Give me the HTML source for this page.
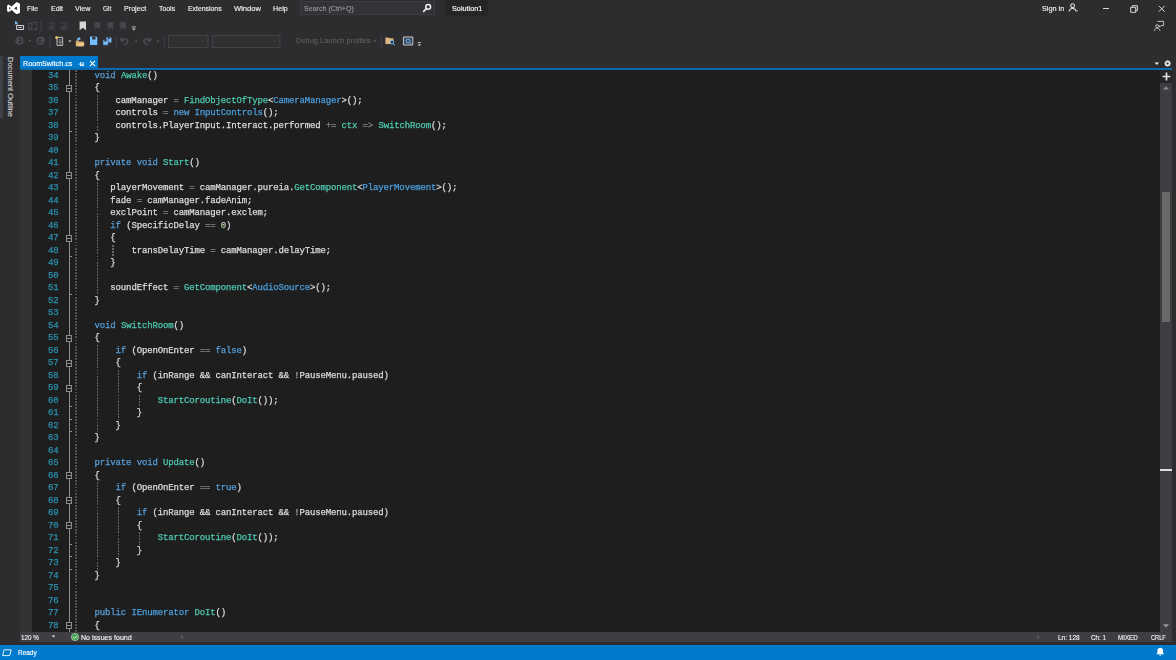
<!DOCTYPE html>
<html lang="en"><head><meta charset="utf-8"><title>RoomSwitch.cs - Solution1</title>
<style>
*{margin:0;padding:0;box-sizing:border-box}
html,body{width:1176px;height:660px;overflow:hidden;background:#2d2d30}
body{position:relative;font-family:"Liberation Sans","DejaVu Sans",sans-serif;font-size:8.6px;color:#f1f1f1}
.abs,.ln,.cl,.fold,.guide,.tick,#page div,#page span.a,#page svg{position:absolute}
#page{position:absolute;left:0;top:0;width:1176px;height:660px;overflow:hidden;background:#2d2d30}
.t{height:10px;line-height:10px;white-space:nowrap;transform-origin:0 0;-webkit-text-stroke:0.15px}
#editor{left:19.6px;top:70px;width:1140.4px;height:561.6px;background:#1e1e1e}
#imargin{left:19.6px;top:70px;width:12.1px;height:561.6px;background:#333333}
.ln{left:30px;width:28.4px;text-align:right;font-family:"Liberation Mono","DejaVu Sans Mono",monospace;font-size:9.000px;line-height:12.5px;height:12.5px;color:#2b91af;white-space:pre;-webkit-text-stroke:0.25px;letter-spacing:-0.1469px}
.cl{font-family:"Liberation Mono","DejaVu Sans Mono",monospace;font-size:9.000px;line-height:12.5px;height:12.5px;color:#dcdcdc;white-space:pre;-webkit-text-stroke:0.25px;letter-spacing:-0.1469px}
.k{color:#569cd6}.m{color:#4ec9b0}.c{color:#4a9fdc}.o{color:#858585}.n{color:#b5cea8}.e{color:#ababab}
.fold{left:65.9px;width:6.5px;height:7.1px;border:1px solid #8c8c8c;background:#1e1e1e}
.fold:after{content:"";position:absolute;left:0.2px;right:0.2px;top:1.9px;height:1.3px;background:#8c8c8c}
#codewrap{left:0;top:0;width:1176px;height:660px;filter:blur(0.42px)}
#oline{left:68.85px;top:70px;width:1.2px;height:561.6px;background:#8c8c8c}
.guide{width:1.7px;background:repeating-linear-gradient(to bottom,#666666 0,#666666 1.9px,transparent 1.9px,transparent 3.0625px)}
.g0{opacity:0.72}
.tick{left:69px;width:3.2px;height:1.2px;background:#8c8c8c}
</style></head>
<body><div id="page">
<!-- ===== title / menu bar ===== -->
<svg id="vslogo" style="left:6.85px;top:1.8px" width="13.2" height="12.6" viewBox="0 0 13.2 12.6"><path fill="#ffffff" fill-rule="evenodd" d="M9.7 0.1L13 1.7V10.7L9.7 12.5L4.6 8.1L1.8 10.1L0.1 9.2V3.4L1.8 2.5L4.6 4.5Z M2.2 4.9V7.7L3.6 6.3Z M9.9 4.4V8.2L7.1 6.3Z"/></svg>
<div class="t" style="left:27.10px;top:3.50px;font-size:8.0px;transform:scaleX(0.8540);color:#f1f1f1;">File</div>
<div class="t" style="left:50.50px;top:3.50px;font-size:8.0px;transform:scaleX(0.8696);color:#f1f1f1;">Edit</div>
<div class="t" style="left:74.70px;top:3.50px;font-size:8.0px;transform:scaleX(0.8953);color:#f1f1f1;">View</div>
<div class="t" style="left:102.80px;top:3.50px;font-size:8.0px;transform:scaleX(0.8105);color:#f1f1f1;">Git</div>
<div class="t" style="left:123.80px;top:3.50px;font-size:8.0px;transform:scaleX(0.8923);color:#f1f1f1;">Project</div>
<div class="t" style="left:159.10px;top:3.50px;font-size:8.0px;transform:scaleX(0.8619);color:#f1f1f1;">Tools</div>
<div class="t" style="left:187.90px;top:3.50px;font-size:8.0px;transform:scaleX(0.8589);color:#f1f1f1;">Extensions</div>
<div class="t" style="left:234.00px;top:3.50px;font-size:8.0px;transform:scaleX(0.9480);color:#f1f1f1;">Window</div>
<div class="t" style="left:273.30px;top:3.50px;font-size:8.0px;transform:scaleX(0.8942);color:#f1f1f1;">Help</div>
<div id="search" style="left:300px;top:1px;width:135px;height:14px;background:#333337;border:1px solid #3b3b40"></div>
<div class="t" style="left:304.20px;top:3.50px;font-size:8.0px;transform:scaleX(0.8855);color:#999999;">Search (Ctrl+Q)</div>
<svg style="left:422px;top:3px" width="10" height="10" viewBox="0 0 10 10"><circle cx="6.2" cy="3.8" r="2.4" fill="none" stroke="#f1f1f1" stroke-width="1.5"/><path d="M4.4 5.6 L1.2 8.8" stroke="#f1f1f1" stroke-width="1.7"/></svg>
<div style="left:446px;top:0;width:42px;height:15.5px;background:#252526"></div>
<div class="t" style="left:451.50px;top:3.50px;font-size:8.0px;transform:scaleX(0.9083);color:#ffffff;">Solution1</div>
<div class="t" style="left:1041.50px;top:3.50px;font-size:8.0px;transform:scaleX(0.9109);color:#f1f1f1;">Sign in</div>
<svg style="left:1068.4px;top:3.2px" width="11" height="10" viewBox="0 0 11 10"><circle cx="4.600" cy="2.700" r="1.900" fill="none" stroke="#e4e4e4" stroke-width="1.050"/><path d="M1 8.600C1.400 6.200 2.900 5.400 4.600 5.400C6.300 5.400 7.700 6.200 8.200 8.300" fill="none" stroke="#e4e4e4" stroke-width="1.050"/><path d="M8.300 7.600h1.800l-0.900 1.200z" fill="#e4e4e4"/></svg>
<div style="left:1102.500px;top:7.900px;width:6.400px;height:1.100px;background:#d8d8d8"></div>
<svg style="left:1129.600px;top:4.600px" width="8" height="8" viewBox="0 0 8 8"><path d="M0.700 2.300h5v5h-5z M2.300 2.300v-1.600h5v5h-1.600" fill="none" stroke="#dcdcdc" stroke-width="1"/></svg>
<svg style="left:1158.400px;top:5px" width="8" height="8" viewBox="0 0 8 8"><path d="M0.900 0.900L6.700 6.700M6.700 0.900L0.900 6.700" stroke="#dcdcdc" stroke-width="0.950"/></svg>
<svg style="left:1153px;top:20px" width="12" height="12" viewBox="0 0 12 12"><path d="M4.4 1.4h6.2v4.2h-2.6l-1.4 1.4v-1.4" fill="none" stroke="#d0d0d0" stroke-width="0.9"/><circle cx="4.2" cy="6.2" r="1.5" fill="none" stroke="#d0d0d0" stroke-width="0.9"/><path d="M1.4 10.8C1.8 8.8 3 8.2 4.2 8.2C5.4 8.2 6.6 8.8 7 10.8" fill="none" stroke="#d0d0d0" stroke-width="0.9"/></svg>

<!-- ===== toolbar row 1 ===== -->
<svg style="left:13px;top:20px;filter:blur(0.35px)" width="125" height="12" viewBox="0 0 125 12">
 <path d="M2 0.800L2 4.800L3.200 3.800L4.300 5.300L5 4.800L4 3.400L5.400 3.200Z" fill="#75beff"/>
 <path d="M3.600 5.500h7v4h-7z" fill="none" stroke="#d6d6d6" stroke-width="1"/><path d="M5.400 7.500h3.600" stroke="#d6d6d6" stroke-width="0.900"/>
 <path d="M15.6 3.4h3.2v6h-3.2zM20.2 2.4h3.6v7h-3.6" fill="none" stroke="#4a4a4e" stroke-width="1.1"/>
 <path d="M28 0.5v11" stroke="#3f3f46" stroke-width="1"/>
 <path d="M35.6 3h6M37.6 5.2h4M35.6 7.4h6M35.6 9h6" stroke="#46464a" stroke-width="1.1"/>
 <path d="M47.4 3h7M50 5.2h4.4M47.4 7.4h7M47.4 9h7" stroke="#46464a" stroke-width="1.1"/>
 <path d="M66.6 1.4h6.4v8.8l-3.2-2.4l-3.2 2.4z" fill="#d6d6d6"/>
 <path d="M82 2.2h5v7l-2.5-1.9l-2.5 1.9z M80 4.4h2" fill="#48484c" stroke="#48484c" stroke-width="0.6"/>
 <path d="M95 2.2h5v7l-2.5-1.9l-2.5 1.9z M93 4.4h2" fill="#48484c" stroke="#48484c" stroke-width="0.6"/>
 <path d="M107.6 2.2h5v7l-2.5-1.9l-2.5 1.9z M106 4.4h1.6" fill="#48484c" stroke="#48484c" stroke-width="0.6"/>
 <path d="M118.8 6.9h4" stroke="#c8c8c8" stroke-width="0.9"/><path d="M118.8 8.4h4l-2 2.2z" fill="#c8c8c8"/>
</svg>

<!-- ===== toolbar row 2 ===== -->
<svg style="left:13px;top:34px;filter:blur(0.35px)" width="412" height="15" viewBox="0 0 412 15">
 <circle cx="6.4" cy="6.8" r="3.300" fill="none" stroke="#505054" stroke-width="1.500"/><path d="M4.6 6.8h3.2M6 5.2l-1.6 1.6l1.6 1.6" fill="none" stroke="#505054" stroke-width="1.1"/>
 <path d="M15.2 6.2h3l-1.5 1.7z" fill="#5a5a5d"/>
 <circle cx="27.6" cy="6.8" r="3.300" fill="none" stroke="#505054" stroke-width="1.500"/><path d="M26.2 6.8h3.2M28 5.2l1.6 1.6l-1.6 1.6" fill="none" stroke="#505054" stroke-width="1.1"/>
 <path d="M37 1.5v12" stroke="#3f3f46" stroke-width="1"/>
 <path d="M44 3.4h5.6v8h-5.6z" fill="#2d2d30" stroke="#d0d0d0" stroke-width="0.9"/><path d="M45.4 6h3M45.4 8h3" stroke="#bdbdbd" stroke-width="0.7"/><circle cx="43.6" cy="3.4" r="1.5" fill="#e8b866"/><circle cx="48.4" cy="9.6" r="1.6" fill="#3a3a3d" stroke="#d0d0d0" stroke-width="0.6"/>
 <path d="M55.4 6.6h3l-1.5 1.7z" fill="#d8d8d8"/>
 <path d="M62.8 6.600h2.800l0.800 0.900h4.400v4.700h-8z" fill="#d9ae6c"/><path d="M63.600 12.200l1.300-3.300h6.900l-1.500 3.300z" fill="#edc585"/><path d="M64.200 6.400v-2.400h1.500v-1.200l2.200 1.900l-2.200 1.900v-1.200h-0.400v1z" fill="#75beff"/>
 <path d="M77 2.600h6.300l1 1v7.400h-7.300z" fill="#75beff"/><path d="M79.300 2.600h3.200v2.900h-3.200z" fill="#2d2d30"/>
 <path d="M93.400 3.200h4.200l0.800 0.800v4.600h-5z" fill="#75beff"/><path d="M94.800 3.200h1.900v1.900h-1.900z" fill="#2d2d30"/><path d="M89.900 5.800h4.600l0.800 0.800v4.600h-5.400z" fill="#75beff" stroke="#2d2d30" stroke-width="0.6"/><path d="M91.400 5.900h2v1.700h-2z" fill="#2d2d30"/>
 <path d="M103.4 1.5v12" stroke="#3f3f46" stroke-width="1"/>
 <path d="M108.200 3.800v3.200h3.200M108.600 6.600c1.400-2.400 4.800-2.600 5.800-0.200c0.800 2-1 3.600-3.400 4.600" fill="none" stroke="#4c4c50" stroke-width="1.600"/>
 <path d="M121.6 6.6h3l-1.5 1.6z" fill="#5a5a5d"/>
 <path d="M137.4 3.800v3.200h-3.200M137 6.600c-1.400-2.400-4.800-2.600-5.800-0.200c-0.800 2 1 3.600 3.400 4.600" fill="none" stroke="#4c4c50" stroke-width="1.600"/>
 <path d="M143.6 6.6h3l-1.5 1.6z" fill="#5a5a5d"/>
 <path d="M151.4 1.5v12" stroke="#3f3f46" stroke-width="1"/>
 <rect x="155.5" y="1.5" width="39.5" height="12" fill="#303033" stroke="#434346" stroke-width="1"/><path d="M188.4 6.6h2.6l-1.3 1.5z" fill="#4a4a4d"/>
 <rect x="199.5" y="1.5" width="67.5" height="12" fill="#303033" stroke="#434346" stroke-width="1"/><path d="M260.4 6.6h2.6l-1.3 1.5z" fill="#4a4a4d"/>
 <path d="M360.4 6.6h3l-1.5 1.6z" fill="#656565"/>
 <path d="M368.4 1.5v12" stroke="#3f3f46" stroke-width="1"/>
 <path d="M372.4 3.4h3l0.8 0.9h4.2v5.8h-8z" fill="#dcb67a"/><circle cx="379" cy="8.2" r="1.8" fill="#2d2d30" stroke="#75beff" stroke-width="0.9"/><path d="M380.2 9.6l1.8 1.8" stroke="#75beff" stroke-width="1"/>
 <path d="M390.4 3h9.4v8h-9.4z" fill="#3a4a5c" stroke="#d6d6d6" stroke-width="0.9"/><circle cx="395" cy="7" r="2" fill="none" stroke="#75beff" stroke-width="0.9"/><path d="M396.4 8.4l1.6 1.6" stroke="#75beff" stroke-width="0.9"/>
 <path d="M404.6 8.6h3.4" stroke="#c8c8c8" stroke-width="0.9"/><path d="M404.6 10.2h3.4l-1.7 2z" fill="#c8c8c8"/>
</svg>

<div class="t" style="left:296.00px;top:36.10px;font-size:8.0px;transform:scaleX(0.9320);color:#5e5e5e;">Debug Launch profiles</div>
<!-- ===== left auto-hide strip ===== -->
<div style="left:0;top:56px;width:2.8px;height:61.5px;background:#3f3f46"></div>
<div class="t" style="left:15.00px;top:57.00px;font-size:7.5px;letter-spacing:-0.009px;color:#d0d0d0;transform:rotate(90deg);transform-origin:0 0">Document Outline</div>

<!-- ===== tab well ===== -->
<div style="left:19.6px;top:56px;width:78.5px;height:13px;background:#007acc"></div>
<div class="t" style="left:22.50px;top:58.50px;font-size:8.0px;transform:scaleX(0.8944);color:#ffffff;">RoomSwitch.cs</div>
<svg style="left:77.8px;top:60.8px" width="7" height="6" viewBox="0 0 7 6"><path d="M0.6 3.1h1.8M2.5 1.3v3.6M2.5 1.9h3.2v2.3h-3.2" fill="none" stroke="#ffffff" stroke-width="0.8"/><path d="M2.5 4.2h3.2" stroke="#ffffff" stroke-width="1.3"/></svg>
<svg style="left:88.5px;top:60.2px" width="7" height="7" viewBox="0 0 7 7"><path d="M0.9 0.9L6.1 6.1M6.1 0.9L0.9 6.1" stroke="#ffffff" stroke-width="1.15"/></svg>
<div style="left:19.6px;top:68px;width:1152.4px;height:2px;background:#0a6cb0"></div>
<svg style="left:1153px;top:60px" width="22" height="8" viewBox="0 0 22 8"><path d="M1.6 2.4h4.4l-2.2 2.6z" fill="#f1f1f1"/><circle cx="14.6" cy="3.4" r="2.1" fill="none" stroke="#e6e6e6" stroke-width="1.5"/><path d="M14.6 0.3v6.2M11.5 3.4h6.2M12.4 1.2l4.4 4.4M16.8 1.2l-4.4 4.4" stroke="#e6e6e6" stroke-width="0.7"/><circle cx="14.6" cy="3.4" r="0.9" fill="#2d2d30"/></svg>

<!-- ===== editor ===== -->
<div id="editor"></div>
<div id="imargin"></div>
<div id="oline"></div>
<div id="codewrap">
<div class="ln" style="top:69.90px">34</div>
<div class="cl" style="top:69.90px;left:94.60px"><span class="k">void</span> <span class="m">Awake</span>()</div>
<div class="ln" style="top:82.40px">35</div>
<div class="fold" style="top:84.70px"></div>
<div class="cl" style="top:82.40px;left:94.60px">{</div>
<div class="ln" style="top:94.90px">36</div>
<div class="cl" style="top:94.90px;left:115.62px">camManager <span class="o">=</span> <span class="m">FindObjectOfType</span>&lt;<span class="c">CameraManager</span>&gt;();</div>
<div class="ln" style="top:107.40px">37</div>
<div class="cl" style="top:107.40px;left:115.62px">controls <span class="o">=</span> <span class="k">new</span> <span class="c">InputControls</span>();</div>
<div class="ln" style="top:119.90px">38</div>
<div class="cl" style="top:119.90px;left:115.62px">controls.PlayerInput.Interact.performed <span class="o">+=</span> <span class="m">ctx</span> <span class="o">=&gt;</span> <span class="m">SwitchRoom</span>();</div>
<div class="ln" style="top:132.40px">39</div>
<div class="cl" style="top:132.40px;left:94.60px">}</div>
<div class="ln" style="top:144.90px">40</div>
<div class="ln" style="top:157.40px">41</div>
<div class="cl" style="top:157.40px;left:94.60px"><span class="k">private</span> <span class="k">void</span> <span class="m">Start</span>()</div>
<div class="ln" style="top:169.90px">42</div>
<div class="fold" style="top:172.20px"></div>
<div class="cl" style="top:169.90px;left:94.60px">{</div>
<div class="ln" style="top:182.40px">43</div>
<div class="cl" style="top:182.40px;left:110.36px">playerMovement <span class="o">=</span> camManager.pureia.<span class="m">GetComponent</span>&lt;<span class="c">PlayerMovement</span>&gt;();</div>
<div class="ln" style="top:194.90px">44</div>
<div class="cl" style="top:194.90px;left:110.36px">fade <span class="o">=</span> camManager.fadeAnim;</div>
<div class="ln" style="top:207.40px">45</div>
<div class="cl" style="top:207.40px;left:110.36px">exclPoint <span class="o">=</span> camManager.exclem;</div>
<div class="ln" style="top:219.90px">46</div>
<div class="cl" style="top:219.90px;left:110.36px"><span class="k">if</span> (SpecificDelay <span class="o">==</span> <span class="n">0</span>)</div>
<div class="ln" style="top:232.40px">47</div>
<div class="fold" style="top:234.70px"></div>
<div class="cl" style="top:232.40px;left:110.36px">{</div>
<div class="ln" style="top:244.90px">48</div>
<div class="cl" style="top:244.90px;left:131.38px">transDelayTime <span class="o">=</span> camManager.delayTime;</div>
<div class="ln" style="top:257.40px">49</div>
<div class="cl" style="top:257.40px;left:110.36px">}</div>
<div class="ln" style="top:269.90px">50</div>
<div class="ln" style="top:282.40px">51</div>
<div class="cl" style="top:282.40px;left:110.36px">soundEffect <span class="o">=</span> <span class="m">GetComponent</span>&lt;<span class="c">AudioSource</span>&gt;();</div>
<div class="ln" style="top:294.90px">52</div>
<div class="cl" style="top:294.90px;left:94.60px">}</div>
<div class="ln" style="top:307.40px">53</div>
<div class="ln" style="top:319.90px">54</div>
<div class="cl" style="top:319.90px;left:94.60px"><span class="k">void</span> <span class="m">SwitchRoom</span>()</div>
<div class="ln" style="top:332.40px">55</div>
<div class="fold" style="top:334.70px"></div>
<div class="cl" style="top:332.40px;left:94.60px">{</div>
<div class="ln" style="top:344.90px">56</div>
<div class="cl" style="top:344.90px;left:115.62px"><span class="k">if</span> (OpenOnEnter <span class="o">==</span> <span class="k">false</span>)</div>
<div class="ln" style="top:357.40px">57</div>
<div class="fold" style="top:359.70px"></div>
<div class="cl" style="top:357.40px;left:115.62px">{</div>
<div class="ln" style="top:369.90px">58</div>
<div class="cl" style="top:369.90px;left:136.63px"><span class="k">if</span> (inRange &amp;&amp; canInteract &amp;&amp; <span class="e">!</span>PauseMenu.paused)</div>
<div class="ln" style="top:382.40px">59</div>
<div class="fold" style="top:384.70px"></div>
<div class="cl" style="top:382.40px;left:136.63px">{</div>
<div class="ln" style="top:394.90px">60</div>
<div class="cl" style="top:394.90px;left:157.65px"><span class="m">StartCoroutine</span>(<span class="m">DoIt</span>());</div>
<div class="ln" style="top:407.40px">61</div>
<div class="cl" style="top:407.40px;left:136.63px">}</div>
<div class="ln" style="top:419.90px">62</div>
<div class="cl" style="top:419.90px;left:115.62px">}</div>
<div class="ln" style="top:432.40px">63</div>
<div class="cl" style="top:432.40px;left:94.60px">}</div>
<div class="ln" style="top:444.90px">64</div>
<div class="ln" style="top:457.40px">65</div>
<div class="cl" style="top:457.40px;left:94.60px"><span class="k">private</span> <span class="k">void</span> <span class="m">Update</span>()</div>
<div class="ln" style="top:469.90px">66</div>
<div class="fold" style="top:472.20px"></div>
<div class="cl" style="top:469.90px;left:94.60px">{</div>
<div class="ln" style="top:482.40px">67</div>
<div class="cl" style="top:482.40px;left:115.62px"><span class="k">if</span> (OpenOnEnter <span class="o">==</span> <span class="k">true</span>)</div>
<div class="ln" style="top:494.90px">68</div>
<div class="fold" style="top:497.20px"></div>
<div class="cl" style="top:494.90px;left:115.62px">{</div>
<div class="ln" style="top:507.40px">69</div>
<div class="cl" style="top:507.40px;left:136.63px"><span class="k">if</span> (inRange &amp;&amp; canInteract &amp;&amp; <span class="e">!</span>PauseMenu.paused)</div>
<div class="ln" style="top:519.90px">70</div>
<div class="fold" style="top:522.20px"></div>
<div class="cl" style="top:519.90px;left:136.63px">{</div>
<div class="ln" style="top:532.40px">71</div>
<div class="cl" style="top:532.40px;left:157.65px"><span class="m">StartCoroutine</span>(<span class="m">DoIt</span>());</div>
<div class="ln" style="top:544.90px">72</div>
<div class="cl" style="top:544.90px;left:136.63px">}</div>
<div class="ln" style="top:557.40px">73</div>
<div class="cl" style="top:557.40px;left:115.62px">}</div>
<div class="ln" style="top:569.90px">74</div>
<div class="cl" style="top:569.90px;left:94.60px">}</div>
<div class="ln" style="top:582.40px">75</div>
<div class="ln" style="top:594.90px">76</div>
<div class="ln" style="top:607.40px">77</div>
<div class="cl" style="top:607.40px;left:94.60px"><span class="k">public</span> <span class="c">IEnumerator</span> <span class="m">DoIt</span>()</div>
<div class="ln" style="top:619.90px">78</div>
<div class="fold" style="top:622.20px"></div>
<div class="cl" style="top:619.90px;left:94.60px">{</div>
<div class="guide g0" style="left:75.08px;top:69.90px;height:565.00px"></div>
<div class="guide" style="left:96.60px;top:94.90px;height:37.50px"></div>
<div class="guide" style="left:96.60px;top:182.40px;height:112.50px"></div>
<div class="guide" style="left:96.60px;top:344.90px;height:87.50px"></div>
<div class="guide" style="left:96.60px;top:482.40px;height:87.50px"></div>
<div class="guide" style="left:112.36px;top:244.90px;height:12.50px"></div>
<div class="guide" style="left:117.62px;top:369.90px;height:50.00px"></div>
<div class="guide" style="left:117.62px;top:507.40px;height:50.00px"></div>
<div class="guide" style="left:138.63px;top:394.90px;height:12.50px"></div>
<div class="guide" style="left:138.63px;top:532.40px;height:12.50px"></div>
<div class="tick" style="top:131.10px"></div>
<div class="tick" style="top:256.10px"></div>
<div class="tick" style="top:293.60px"></div>
<div class="tick" style="top:406.10px"></div>
<div class="tick" style="top:418.60px"></div>
<div class="tick" style="top:431.10px"></div>
<div class="tick" style="top:543.60px"></div>
<div class="tick" style="top:556.10px"></div>
<div class="tick" style="top:568.60px"></div>
</div>

<!-- ===== vertical scrollbar ===== -->
<div style="left:1160px;top:70px;width:12px;height:561.6px;background:#3e3e42"></div>
<div style="left:1160px;top:70px;width:12px;height:12.5px;background:#252526"></div>
<svg style="left:1161.5px;top:72px" width="9" height="9" viewBox="0 0 9 9"><path d="M4.5 0.6v7.8M0.6 4.5h7.8" stroke="#e6e6e6" stroke-width="1.7"/></svg>
<svg style="left:1162px;top:85px" width="8" height="6" viewBox="0 0 8 6"><path d="M1 4.6h6l-3-3.4z" fill="#8a8a8f"/></svg>
<div style="left:1162.2px;top:191.5px;width:7.4px;height:130px;background:#686868"></div>
<div style="left:1160px;top:469.3px;width:12px;height:1.4px;background:#dcdcdc"></div>
<svg style="left:1162px;top:623px" width="8" height="6" viewBox="0 0 8 6"><path d="M1 1.2h6l-3 3.4z" fill="#9a9a9f"/></svg>

<!-- ===== bottom editor margin ===== -->
<div style="left:19.6px;top:631.6px;width:1152.4px;height:10.4px;background:#3f3e42"></div>
<div class="t" style="left:21.30px;top:632.50px;font-size:7.4px;transform:scaleX(0.8532);color:#f1f1f1;">120 %</div>
<svg style="left:51px;top:634px" width="5" height="5" viewBox="0 0 5 5"><path d="M0.8 1.6h3.4l-1.7 2z" fill="#f1f1f1"/></svg>
<svg style="left:70.5px;top:632.6px" width="8" height="8" viewBox="0 0 8 8"><circle cx="4" cy="4" r="3.6" fill="#3fa34d" stroke="#d8f0d8" stroke-width="0.6"/><path d="M2.2 4.1l1.3 1.3l2.4-2.7" fill="none" stroke="#ffffff" stroke-width="1"/></svg>
<div class="t" style="left:81.30px;top:632.50px;font-size:7.4px;transform:scaleX(0.9574);color:#f1f1f1;">No issues found</div>
<svg style="left:179px;top:634px" width="5" height="6" viewBox="0 0 5 6"><path d="M3.6 0.8v4.4l-2.4-2.2z" fill="#5e5e62"/></svg>
<svg style="left:1036px;top:634px" width="5" height="6" viewBox="0 0 5 6"><path d="M1.4 0.8v4.4l2.4-2.2z" fill="#5e5e62"/></svg>
<div class="t" style="left:1057.60px;top:632.50px;font-size:7.4px;transform:scaleX(0.8752);color:#f1f1f1;">Ln: 128</div>
<div class="t" style="left:1090.80px;top:632.50px;font-size:7.4px;transform:scaleX(0.8425);color:#f1f1f1;">Ch: 1</div>
<div class="t" style="left:1118.10px;top:632.50px;font-size:7.4px;transform:scaleX(0.8411);color:#f1f1f1;">MIXED</div>
<div class="t" style="left:1150.80px;top:632.50px;font-size:7.4px;transform:scaleX(0.7663);color:#f1f1f1;">CRLF</div>

<!-- ===== status bar ===== -->
<div style="left:0;top:645px;width:1176px;height:15px;background:#007acc"></div>
<svg style="left:2.300px;top:649px" width="10" height="8" viewBox="0 0 10 8"><path d="M2.100 0.800h7.100l-1.500 5.800h-7.100z" fill="none" stroke="#ffffff" stroke-width="0.900"/></svg>
<div class="t" style="left:18.00px;top:647.80px;font-size:7.5px;transform:scaleX(0.8627);color:#ffffff;">Ready</div>
<svg style="left:1155.200px;top:647.200px" width="10.500" height="9.600" viewBox="0 0 11 10"><path d="M5.5 0.8c-2 0-3 1.4-3 3.2v2.2l-1.3 1.4h8.6l-1.3-1.4v-2.2c0-1.800-1-3.200-3-3.200z" fill="#ffffff"/><path d="M4.4 8.2h2.200c0 1.400-2.200 1.400-2.200 0z" fill="#ffffff"/></svg>

</div></body></html>
